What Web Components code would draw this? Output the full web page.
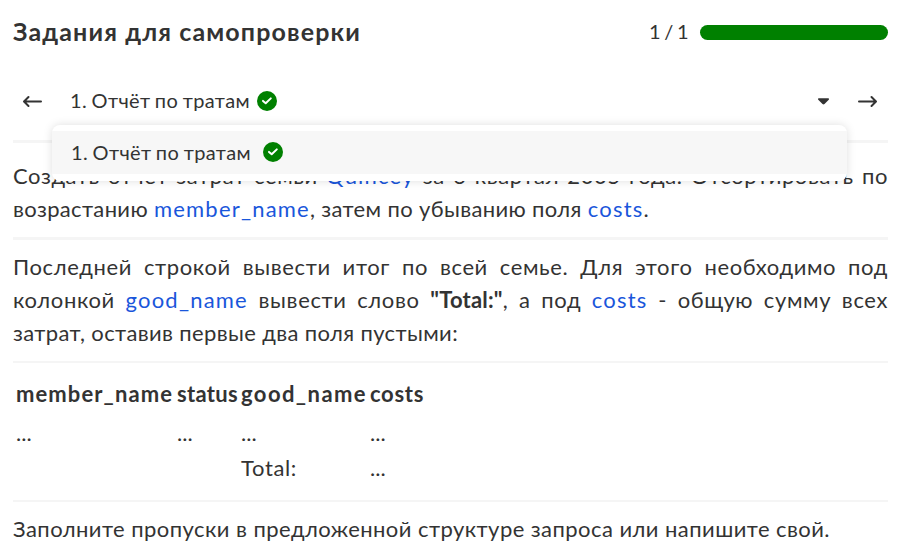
<!DOCTYPE html>
<html lang="ru">
<head>
<meta charset="utf-8">
<title>Задания для самопроверки</title>
<style>
body{margin:0;background:#fff;color:#333;font-family:Lato,"Open Sans",sans-serif}
a{color:#1a56db;text-decoration:none;letter-spacing:1.2px}
b{font-weight:700;letter-spacing:.2px}
</style>
</head>
<body>
<task-page>
  <page-header slot="header" label="Задания для самопроверки" count="1 / 1"></page-header>
  <task-nav slot="nav" label="1. Отчёт по тратам"></task-nav>
  <task-text style="--line:3px;--top:16px;--bottom:12px">
    <fit-line width="875" justify>Создать отчёт затрат семьи <a>Quincey</a> за 3 квартал 2005 года. Отсортировать по</fit-line>
    <fit-line width="636">возрастанию <a>member_name</a>, затем по убыванию поля <a>costs</a>.</fit-line>
  </task-text>
  <task-text style="--line:3px;--top:10px;--bottom:12px">
    <fit-line width="875" justify>Последней строкой вывести итог по всей семье. Для этого необходимо под</fit-line>
    <fit-line width="875" justify>колонкой <a>good_name</a> вывести слово <b>"Total:"</b>, а под <a>costs</a> - общую сумму всех</fit-line>
    <fit-line width="445">затрат, оставив первые два поля пустыми:</fit-line>
  </task-text>
  <result-table></result-table>
  <task-text style="--line:2px;--top:10px">
    <fit-line width="817">Заполните пропуски в предложенной структуре запроса или напишите свой.</fit-line>
  </task-text>
</task-page>
<script>
const define = (name, html, setup) => customElements.define(name, class extends HTMLElement {
  connectedCallback() {
    if (this.shadowRoot) return;
    this.attachShadow({mode: 'open'}).innerHTML = html;
    if (setup) setup(this, this.shadowRoot);
  }
});

define('check-badge', `<style>:host{display:block;width:20px;height:20px}svg{display:block}</style>
<svg width="20" height="20" viewBox="0 0 20 20"><circle cx="10" cy="10" r="10" fill="#008000"/><path d="M6 9.9 8.7 12.3 13.8 7.4" fill="none" stroke="#fff" stroke-width="2" stroke-linecap="round" stroke-linejoin="round"/></svg>`);

define('page-header', `<style>
:host{display:flex;align-items:center;height:64px;font-size:20px}
h1{margin:0;flex:1;font-size:25px;line-height:30px;font-weight:700;padding-bottom:2px}
.count{margin-right:12px;line-height:24px;padding-bottom:2px}
.bar{width:188px;height:15px;border-radius:8px;background:#008000}
</style><h1></h1><span class="count"></span><div class="bar"></div>`, (el, root) => {
  for (const [sel, attr, w] of [['h1', 'label', 348], ['.count', 'count', 39]]) {
    const f = document.createElement('fit-line');
    f.setAttribute('width', w);
    f.textContent = el.getAttribute(attr);
    root.querySelector(sel).append(f);
  }
});

define('task-nav', `<style>
:host{display:block;position:relative;font-size:20px;line-height:28px}
.row{display:flex;align-items:center;height:76px;padding:0 10px 2px 9px;box-sizing:border-box}
.label,.text{word-spacing:-1px}
.label{margin-left:28px;margin-right:7px;width:180px;padding-bottom:2px}
.caret{margin-left:auto;margin-right:28px}
.menu{position:absolute;left:39px;top:61px;width:795px;box-sizing:border-box;padding:6px 0 7px;background:#fff;border-radius:8px;box-shadow:0 0 10px rgba(0,0,0,.13)}
.item{display:flex;align-items:center;height:43px;padding:0 0 2px 19px;box-sizing:border-box;background:#f7f7f7}
.item .text{margin-right:12px;width:180px}
svg{display:block}
</style>
<div class="row">
<svg width="20" height="14" viewBox="0 0 20 14"><path d="M19 7.5H2.5M6.5 3 2 7.5 6.5 12" fill="none" stroke="#333" stroke-width="2" stroke-linecap="round" stroke-linejoin="round"/></svg>
<span class="label"></span><check-badge></check-badge>
<svg class="caret" width="12" height="8" viewBox="0 0 12 8"><path d="M.3 1.3H10.7L11 2.5 6.5 7Q5.5 7.8 4.5 7L0 2.5Z" fill="#333"/></svg>
<svg width="20" height="14" viewBox="0 0 20 14"><path d="M1 7.5H17.5M13.5 3 18 7.5 13.5 12" fill="none" stroke="#333" stroke-width="2" stroke-linecap="round" stroke-linejoin="round"/></svg>
</div>
<div class="menu"><div class="item"><span class="text"></span><check-badge></check-badge></div></div>`, (el, root) => {
  for (const s of root.querySelectorAll('span')) {
    const f = document.createElement('fit-line');
    f.setAttribute('width', 180);
    f.textContent = el.getAttribute('label');
    s.append(f);
  }
});

define('task-text', `<style>
:host{display:block;border-top:var(--line) solid #f5f5f5;padding:var(--top) 0 var(--bottom,11px);font-size:22px;line-height:33px;--track:.62px}
</style><slot></slot>`);

define('result-table', `<style>
:host{display:block;border-top:2px solid #f5f5f5;padding:11px 0 12px;font-size:22px}
.grid{display:grid;grid-template-columns:161px 64px 129px 60px;grid-template-rows:40px 35px 39px;line-height:38px;padding-left:3px}
.h{font-weight:700;padding-top:1px}
</style><div class="grid">
<fit-line class="h" width="157">member_name</fit-line><fit-line class="h" width="61">status</fit-line><fit-line class="h" width="126">good_name</fit-line><fit-line class="h" width="54">costs</fit-line>
<span>...</span><span>...</span><span>...</span><span>...</span>
<span></span><span></span><fit-line width="56">Total:</fit-line><span>...</span>
</div>`);

define('task-page', `<style>
:host{display:block;width:875px;padding-left:13px}
</style><slot name="header"></slot><slot name="nav"></slot><slot></slot>`);

/* One line of text whose tracking is tuned to fill a given measure.
   Defined last: it measures itself with its containers' styles in place. */
define('fit-line', `<style>
:host{display:block;white-space:nowrap}
</style><span><slot></slot></span>`, (el, root) => {
  const span = root.querySelector('span');
  const target = +el.getAttribute('width');
  if (el.hasAttribute('justify')) {
    /* body tracking stays constant, the spaces absorb the rest */
    el.style.letterSpacing = 'var(--track)';
    const gaps = (el.textContent.match(/ /g) || []).length;
    el.style.wordSpacing = (target - span.getBoundingClientRect().width) / gaps + 'px';
  } else {
    /* links and bold runs keep their own tracking */
    let n = el.textContent.length;
    for (const child of el.children) n -= child.textContent.length;
    el.style.letterSpacing = (target - span.getBoundingClientRect().width) / n + 'px';
  }
});
</script>
</body>
</html>
